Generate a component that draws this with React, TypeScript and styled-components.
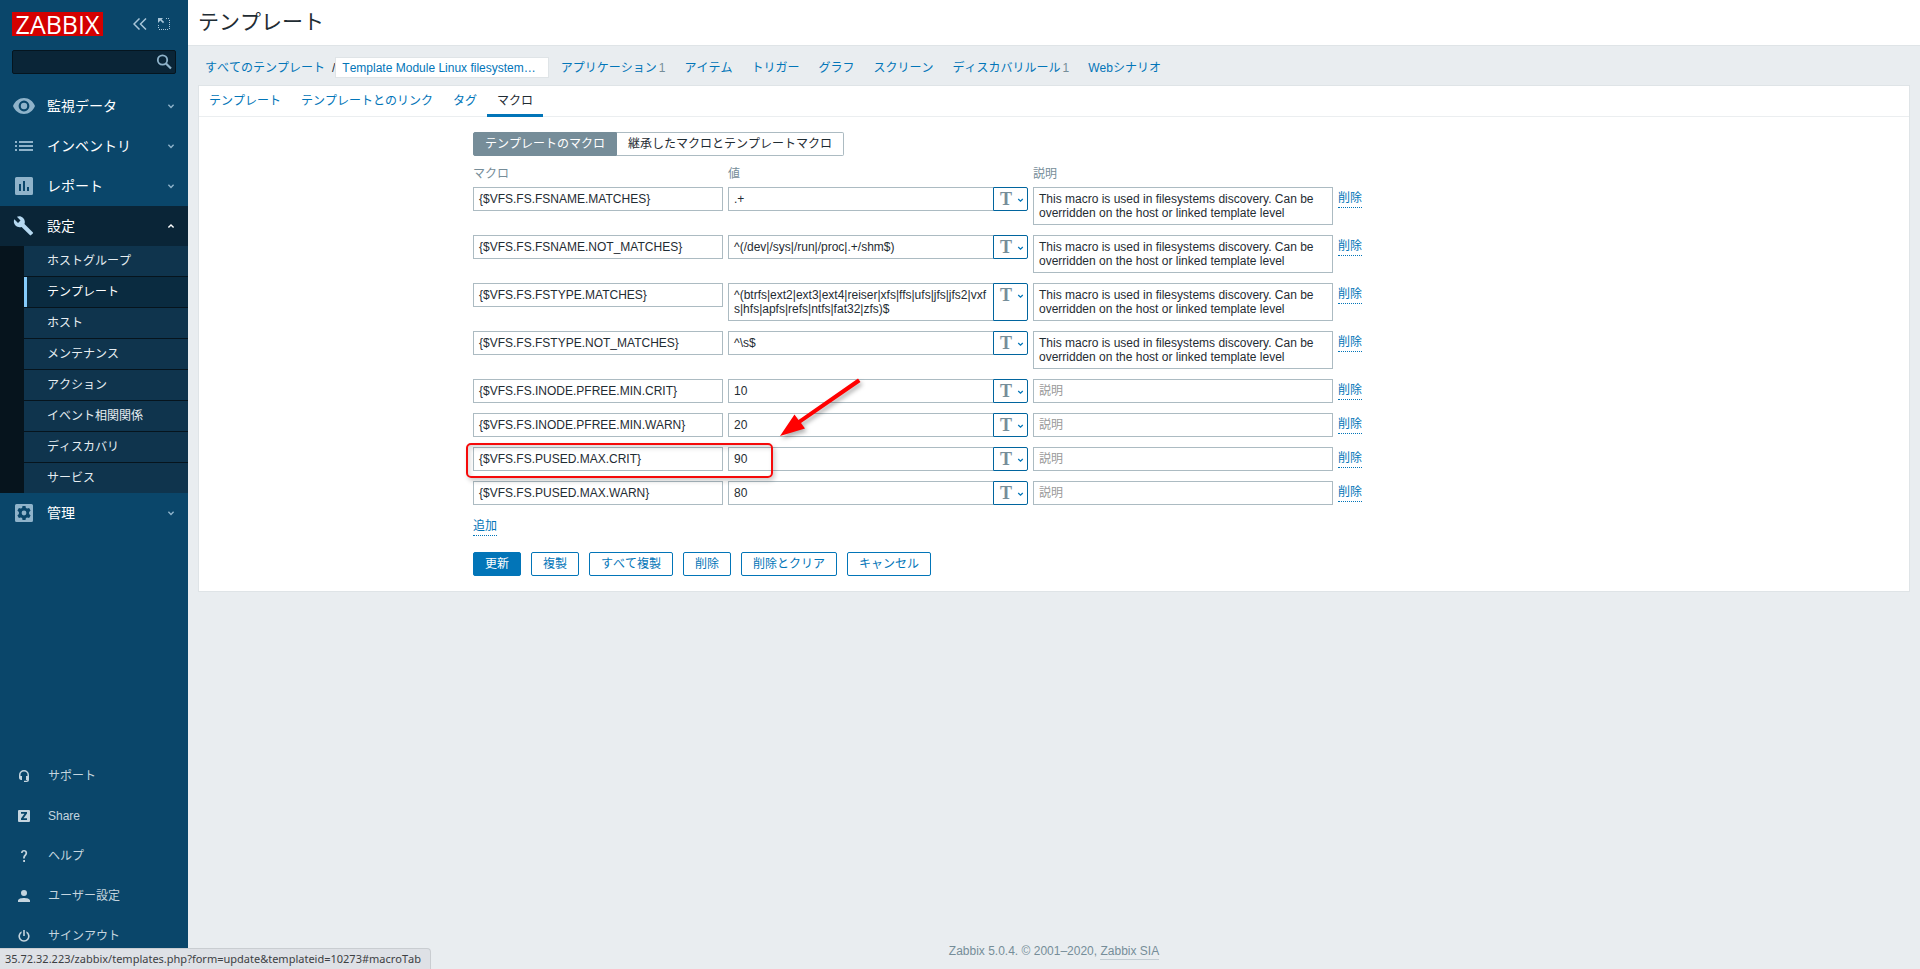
import React from "react";
import styled, { createGlobalStyle, css } from "styled-components";

const sans = `"Liberation Sans", "Noto Sans CJK JP", Arial, sans-serif`;

const GlobalStyle = createGlobalStyle`
  *, *::before, *::after { box-sizing: border-box; }
  body {
    margin: 0;
    background: #e9edf0;
    color: #1f2c33;
    font-family: ${sans};
    font-size: 12px;
    line-height: 14px;
    font-kerning: none;
  }
  button, input, textarea { font: inherit; color: inherit; }
  ul { list-style: none; margin: 0; padding: 0; }
`;

const Page = styled.div`
  display: flex;
  min-height: 100vh;
`;

/* ---------- sidebar ---------- */

const Sidebar = styled.aside`
  flex: 0 0 188px;
  height: 100vh;
  position: sticky;
  top: 0;
  display: flex;
  flex-direction: column;
  overflow: hidden;
  background: #0a466a;
  color: #ffffff;
`;

const SidebarHeader = styled.div`
  display: flex;
  align-items: center;
  padding: 12px 18px 0 12px;
`;

const Logo = styled.a`
  width: 91px;
  height: 24px;
  margin-right: auto;
  background: #d40000;
  color: #ffffff;
  font-family: "Open Sans", sans-serif;
  font-size: 25px;
  font-weight: 500;
  line-height: 24px;
  text-align: center;
  text-decoration: none;
`;

const HeaderButton = styled.button`
  display: flex;
  padding: 0;
  margin-left: 11px;
  border: 0;
  background: none;
  color: #a8c5d8;
  cursor: pointer;
`;

const Search = styled.form`
  display: flex;
  height: 24px;
  margin: 14px 12px 12px;
  border: 1px solid #05151f;
  border-radius: 2px;
  background: #0a2537;
`;

const SearchInput = styled.input`
  flex: 1;
  min-width: 0;
  padding: 0 5px;
  border: 0;
  outline: 0;
  background: transparent;
`;

const SearchButton = styled.button`
  display: flex;
  align-items: center;
  padding: 0 3px;
  border: 0;
  background: none;
  color: #8fb3ca;
`;

const MenuLink = styled.a<{ $open?: boolean }>`
  display: flex;
  align-items: center;
  height: 40px;
  padding: 0 13px 0 12px;
  color: #ffffff;
  font-size: 14px;
  text-decoration: none;
  background: ${(p) => (p.$open ? "#0a2537" : "transparent")};
  svg:first-child { color: ${(p) => (p.$open ? "#b5d8f0" : "#8fb3ca")}; }
  svg:last-child { color: ${(p) => (p.$open ? "#ffffff" : "#8fb3ca")}; }
`;

const MenuText = styled.span`
  flex: 1;
  margin-left: 11px;
`;

const SubMenu = styled.ul`
  border-left: 24px solid #06141d;
  background: #06141d;
  li + li { margin-top: 1px; }
`;

const SubLink = styled.a<{ $selected?: boolean }>`
  display: block;
  height: 30px;
  padding-left: 20px;
  border-left: 3px solid ${(p) => (p.$selected ? "#85cbfb" : "#0f344d")};
  background: ${(p) => (p.$selected ? "#0a2b40" : "#0f344d")};
  color: ${(p) => (p.$selected ? "#ffffff" : "#e6edf1")};
  line-height: 30px;
  text-decoration: none;
`;

const UserMenu = styled.ul`
  margin-top: auto;
  padding-bottom: 13px;
`;

const UserLink = styled.a`
  display: flex;
  align-items: center;
  gap: 18px;
  height: 40px;
  padding-left: 18px;
  color: #c5d5df;
  text-decoration: none;
`;

/* ---------- main column ---------- */

const Main = styled.main`
  flex: 1;
  min-width: 0;
  display: flex;
  flex-direction: column;
`;

const TitleBar = styled.header`
  height: 46px;
  padding: 0 10px;
  border-bottom: 1px solid #dfe4e7;
  background: #ffffff;
`;

const Title = styled.h1`
  margin: 0;
  font-size: 21px;
  font-weight: 400;
  line-height: 44px;
`;

const ObjectNav = styled.nav`
  display: flex;
  align-items: center;
  height: 39px;
  padding: 11px 17px 7px;
`;

const NavLink = styled.a`
  color: #0275b8;
  text-decoration: none;
  white-space: nowrap;
`;

const Slash = styled.span`
  margin-left: 7px;
`;

const CurrentObject = styled(NavLink)`
  height: 21px;
  margin-right: 12px;
  padding: 0 12px 0 6px;
  border: 1px solid #dfe4e7;
  background: #ffffff;
  line-height: 20px;
`;

const NavItems = styled.ul`
  display: flex;
  gap: 19px;
  white-space: nowrap;
`;

const Count = styled.sup`
  margin-left: 2px;
  color: #768d99;
  font-size: 12px;
  vertical-align: baseline;
`;

const Panel = styled.section`
  margin: 0 10px;
  border: 1px solid #dfe4e7;
  background: #ffffff;
`;

const Tabs = styled.ul`
  display: flex;
  height: 31px;
  border-bottom: 1px solid #ebeef0;
`;

const Tab = styled.a<{ $active?: boolean }>`
  display: block;
  height: 31px;
  padding: 0 10px;
  border-bottom: 3px solid ${(p) => (p.$active ? "#0275b8" : "transparent")};
  color: ${(p) => (p.$active ? "#1f2c33" : "#0275b8")};
  line-height: 30px;
  text-decoration: none;
`;

const FormBody = styled.form`
  padding: 15px 10px 15px 274px;
`;

const Segmented = styled.div`
  display: flex;
`;

const Segment = styled.label<{ $checked?: boolean }>`
  height: 24px;
  padding: 0 11px;
  border: 1px solid ${(p) => (p.$checked ? "#768d99" : "#acbbc2")};
  border-radius: ${(p) => (p.$checked ? "2px 0 0 2px" : "0 2px 2px 0")};
  background: ${(p) => (p.$checked ? "#768d99" : "#ffffff")};
  color: ${(p) => (p.$checked ? "#ffffff" : "#1f2c33")};
  line-height: 22px;
  & + & { border-left: 0; }
  input { position: absolute; opacity: 0; pointer-events: none; }
`;

const MacroArea = styled.div`
  position: relative;
`;

const MacroTable = styled.table`
  border-collapse: collapse;
  th {
    padding: 11px 0 6px;
    color: #768d99;
    font-weight: 400;
    line-height: 14px;
    text-align: left;
  }
  td {
    padding: 0 5px 10px 0;
    vertical-align: top;
  }
`;

const field = css`
  display: block;
  padding: 4px 5px;
  border: 1px solid #acbbc2;
  border-radius: 0;
  outline: 0;
  background: #ffffff;
  font-kerning: normal;
  line-height: 14px;
  resize: none;
  overflow: hidden;
  &::placeholder { color: #999999; opacity: 1; }
`;

const TextField = styled.textarea<{ $width: number; $lines?: number }>`
  ${field}
  width: ${(p) => p.$width}px;
  height: ${(p) => (p.$lines === 2 ? 38 : 24)}px;
`;

const ValueGroup = styled.div`
  display: flex;
  width: 300px;
`;

const ValueField = styled(TextField)`
  border-right: 0;
  word-break: break-all;
`;

const TypeButton = styled.button`
  display: flex;
  align-items: flex-start;
  gap: 5px;
  width: 35px;
  padding: 2px 0 0 6px;
  border: 1px solid #01659e;
  border-radius: 0 2px 2px 0;
  background: #ffffff;
  color: #768d99;
  font-family: "Liberation Serif", serif;
  font-size: 18px;
  font-weight: 700;
  line-height: 18px;
  svg { margin-top: 7px; color: #0275b8; }
`;

const DottedButton = styled.button`
  display: block;
  margin-top: 3px;
  padding: 0 0 1px;
  border: 0;
  border-bottom: 1px dotted #0275b8;
  background: none;
  color: #0275b8;
  line-height: 16px;
  cursor: pointer;
`;

const Highlight = styled.div`
  position: absolute;
  left: -7px;
  top: 287px;
  width: 307px;
  height: 35px;
  border: 2px solid #f50a0a;
  border-radius: 5px;
  box-shadow: 2px 3px 5px rgba(0, 0, 0, 0.2), inset 2px 3px 5px rgba(0, 0, 0, 0.15);
  pointer-events: none;
`;

const Arrow = styled.svg`
  position: absolute;
  left: 303px;
  top: 217px;
  pointer-events: none;
  filter: drop-shadow(2px 3px 2px rgba(0, 0, 0, 0.3));
`;

const Actions = styled.div`
  display: flex;
  gap: 10px;
  margin-top: 16px;
`;

const ActionButton = styled.button<{ $primary?: boolean }>`
  height: 24px;
  padding: 0 11px;
  border: 1px solid #0275b8;
  border-radius: 2px;
  background: ${(p) => (p.$primary ? "#0275b8" : "#ffffff")};
  color: ${(p) => (p.$primary ? "#ffffff" : "#0275b8")};
  line-height: 20px;
  white-space: nowrap;
`;

const Footer = styled.footer`
  margin-top: auto;
  padding: 10px 10px 9px;
  color: #768d99;
  text-align: center;
  line-height: 16px;
  a {
    display: inline-block;
    border-bottom: 1px solid #c3cdd3;
    color: inherit;
    text-decoration: none;
  }
`;

const StatusBar = styled.div`
  position: fixed;
  left: 0;
  bottom: 0;
  height: 21px;
  padding: 0 9px 0 5px;
  border-top: 1px solid #c9cdd1;
  border-right: 1px solid #c9cdd1;
  border-radius: 0 4px 0 0;
  background: #dee1e6;
  color: #3c4043;
  font-family: "Noto Sans", sans-serif;
  font-size: 11px;
  line-height: 19px;
`;

/* ---------- icons ---------- */

const Chevron = ({ up, size = 8 }: { up?: boolean; size?: number }) => (
  <svg width={size} height="6" viewBox="0 0 8 6" fill="none" stroke="currentColor" strokeWidth="1.4">
    <path d={up ? "M1.400 4.600 4 2l2.600 2.600" : "M1.400 1.800 4 4.400l2.600-2.600"} />
  </svg>
);

const MenuIcon = ({ children }: { children: React.ReactNode }) => (
  <svg width="24" height="24" viewBox="0 0 24 24" fill="currentColor">
    {children}
  </svg>
);

const icons = {
  eye: <path fillRule="evenodd" d="M12 4C7 4 3 7.200 1 12c2 4.800 6 8 11 8s9-3.200 11-8c-2-4.800-6-8-11-8Zm0 13.400a5.400 5.400 0 1 1 0-10.800 5.400 5.400 0 0 1 0 10.800Zm0-2.200a3.200 3.200 0 1 0 0-6.400 3.200 3.200 0 0 0 0 6.400Z" />,
  list: <path d="M3 7h2v2H3zM3 11h2v2H3zM3 15h2v2H3zM7 7h14v2H7zM7 11h14v2H7zM7 15h14v2H7z" />,
  chart: <path fillRule="evenodd" d="M4.500 3h15A1.500 1.500 0 0 1 21 4.500v15a1.500 1.500 0 0 1-1.500 1.500h-15A1.500 1.500 0 0 1 3 19.500v-15A1.500 1.500 0 0 1 4.500 3ZM7 10v7h2v-7Zm4-3v10h2V7Zm4 6v4h2v-4Z" />,
  wrench: <path d="m20.700 18.200-8.200-8.200c.8-2 .3-4.500-1.400-6.100C9.400 2.200 6.900 1.900 4.900 2.800l3.600 3.600-2.500 2.500-3.700-3.600c-.9 2-.5 4.500 1.200 6.200 1.700 1.700 4.100 2.100 6.100 1.400l8.200 8.200c.4.400.9.400 1.300 0l1.700-1.700c.4-.3.4-.9-.1-1.200Z" />,
  gear: <path fillRule="evenodd" d="M4.500 3h15A1.500 1.500 0 0 1 21 4.500v15a1.500 1.500 0 0 1-1.500 1.500h-15A1.500 1.500 0 0 1 3 19.500v-15A1.500 1.500 0 0 1 4.500 3Zm6 2-.4 1.900-1.300.7-1.900-.6-1.500 2.600L6.900 11v2l-1.500 1.400L6.900 17l1.900-.6 1.300.7.4 1.900h3l.4-1.900 1.300-.7 1.900.6 1.500-2.600-1.500-1.400v-2l1.500-1.400L17.100 7l-1.900.6-1.300-.7-.4-1.900ZM12 9.600a2.400 2.400 0 1 1 0 4.800 2.400 2.400 0 0 1 0-4.800Z" />,
};

const SmallIcon = ({ children }: { children: React.ReactNode }) => (
  <svg width="12" height="12" viewBox="0 0 12 12" fill="currentColor">
    {children}
  </svg>
);

const userIcons = {
  support: <path d="M6 0a5 5 0 0 0-5 5v2.500C1 8.900 1.900 10 3.200 10H4V6H2.500V5a3.500 3.500 0 0 1 7 0v1H8v4h1.400c0 .4-.4.700-.9.700H6V12h2.500A2.500 2.500 0 0 0 11 9.500V5a5 5 0 0 0-5-5Z" />,
  share: <path fillRule="evenodd" d="M1 0h10a1 1 0 0 1 1 1v10a1 1 0 0 1-1 1H1a1 1 0 0 1-1-1V1a1 1 0 0 1 1-1Zm2 2v1.800h3.500L3 8.500V10h6V8.200H5.500L9 3.500V2Z" />,
  help: <path d="M5.200 10h1.800v2H5.200zM6 0C4.300 0 3 1.200 3 3h1.600c0-.9.600-1.500 1.400-1.500S7.500 2.100 7.500 3c0 1.500-2.400 2-2.400 4.700v.8h1.700v-.6C6.800 6 9.200 5.500 9.200 3 9.200 1.200 7.800 0 6 0Z" />,
  user: <path d="M6 0a3 3 0 1 1 0 6 3 3 0 0 1 0-6ZM0 12v-1.500C0 8.800 3.500 8 6 8s6 .8 6 2.500V12Z" />,
  power: <path d="M5.200 0h1.600v6H5.200zM3.600 1.200v1.900a4 4 0 1 0 4.800 0V1.200a5.600 5.600 0 1 1-4.800 0Z" />,
};

/* ---------- data ---------- */

const menuTop = [
  { label: "監視データ", icon: icons.eye },
  { label: "インベントリ", icon: icons.list },
  { label: "レポート", icon: icons.chart },
];

const subItems = ["ホストグループ", "テンプレート", "ホスト", "メンテナンス", "アクション", "イベント相関関係", "ディスカバリ", "サービス"];

const userItems = [
  { label: "サポート", icon: userIcons.support },
  { label: "Share", icon: userIcons.share },
  { label: "ヘルプ", icon: userIcons.help },
  { label: "ユーザー設定", icon: userIcons.user },
  { label: "サインアウト", icon: userIcons.power },
];

const navItems: { label: string; count?: number }[] = [
  { label: "アプリケーション", count: 1 },
  { label: "アイテム" },
  { label: "トリガー" },
  { label: "グラフ" },
  { label: "スクリーン" },
  { label: "ディスカバリルール", count: 1 },
  { label: "Webシナリオ" },
];

const tabs = ["テンプレート", "テンプレートとのリンク", "タグ", "マクロ"];

const discovery = "This macro is used in filesystems discovery. Can be overridden on the host or linked template level";

const macros: { name: string; value: string; lines?: number; text?: string }[] = [
  { name: "{$VFS.FS.FSNAME.MATCHES}", value: ".+", text: discovery },
  { name: "{$VFS.FS.FSNAME.NOT_MATCHES}", value: "^(/dev|/sys|/run|/proc|.+/shm$)", text: discovery },
  { name: "{$VFS.FS.FSTYPE.MATCHES}", value: "^(btrfs|ext2|ext3|ext4|reiser|xfs|ffs|ufs|jfs|jfs2|vxfs|hfs|apfs|refs|ntfs|fat32|zfs)$", lines: 2, text: discovery },
  { name: "{$VFS.FS.FSTYPE.NOT_MATCHES}", value: "^\\s$", text: discovery },
  { name: "{$VFS.FS.INODE.PFREE.MIN.CRIT}", value: "10" },
  { name: "{$VFS.FS.INODE.PFREE.MIN.WARN}", value: "20" },
  { name: "{$VFS.FS.PUSED.MAX.CRIT}", value: "90" },
  { name: "{$VFS.FS.PUSED.MAX.WARN}", value: "80" },
];

const actions = ["更新", "複製", "すべて複製", "削除", "削除とクリア", "キャンセル"];

const MainMenuItem = ({ label, icon, open }: { label: string; icon: React.ReactNode; open?: boolean }) => (
  <MenuLink href="#" $open={open}>
    <MenuIcon>{icon}</MenuIcon>
    <MenuText>{label}</MenuText>
    <Chevron up={open} />
  </MenuLink>
);

export default function App() {
  return (
    <>
      <GlobalStyle />
      <Page>
        <Sidebar>
          <SidebarHeader>
            <Logo href="#">ZABBIX</Logo>
            <HeaderButton type="button" aria-label="サイドバーを折りたたむ">
              <svg width="14" height="12" viewBox="0 0 14 12" fill="none" stroke="currentColor" strokeWidth="1.500">
                <path d="M6.500.5 1 6l5.500 5.500M13 .5 7.500 6l5.500 5.500" />
              </svg>
            </HeaderButton>
            <HeaderButton type="button" aria-label="サイドバーを隠す">
              <svg width="12" height="12" viewBox="0 0 12 12" fill="none" stroke="currentColor">
                <path d="M8 .5h4M11.500 2v10M10 11.500H0M.5 10V6" strokeDasharray="1 1" />
                <path d="M0 0h5L3.600 1.400 6.200 4 5 5.200 2.400 2.600 0 5Z" fill="currentColor" stroke="none" />
              </svg>
            </HeaderButton>
          </SidebarHeader>
          <Search onSubmit={(e) => e.preventDefault()}>
            <SearchInput type="text" aria-label="検索" />
            <SearchButton type="submit" aria-label="検索する">
              <svg width="16" height="16" viewBox="0 0 16 16" fill="none" stroke="currentColor">
                <circle cx="6.500" cy="6" r="4.700" strokeWidth="1.800" />
                <path d="m10 9.500 5 5" strokeWidth="2.200" />
              </svg>
            </SearchButton>
          </Search>
          <nav>
            <ul>
              {menuTop.map((m) => (
                <li key={m.label}>
                  <MainMenuItem {...m} />
                </li>
              ))}
              <li>
                <MainMenuItem label="設定" icon={icons.wrench} open />
                <SubMenu>
                  {subItems.map((s) => (
                    <li key={s}>
                      <SubLink href="#" $selected={s === "テンプレート"}>{s}</SubLink>
                    </li>
                  ))}
                </SubMenu>
              </li>
              <li>
                <MainMenuItem label="管理" icon={icons.gear} />
              </li>
            </ul>
          </nav>
          <UserMenu>
            {userItems.map((u) => (
              <li key={u.label}>
                <UserLink href="#">
                  <SmallIcon>{u.icon}</SmallIcon>
                  {u.label}
                </UserLink>
              </li>
            ))}
          </UserMenu>
        </Sidebar>

        <Main>
          <TitleBar>
            <Title>テンプレート</Title>
          </TitleBar>
          <ObjectNav>
            <NavLink href="#">すべてのテンプレート</NavLink>
            <Slash>/</Slash>
            <CurrentObject href="#">Template Module Linux filesystem…</CurrentObject>
            <NavItems>
              {navItems.map((n) => (
                <li key={n.label}>
                  <NavLink href="#">{n.label}</NavLink>
                  {n.count && <Count>{n.count}</Count>}
                </li>
              ))}
            </NavItems>
          </ObjectNav>

          <Panel>
            <Tabs>
              {tabs.map((t) => (
                <li key={t}>
                  <Tab href="#" $active={t === "マクロ"}>{t}</Tab>
                </li>
              ))}
            </Tabs>
            <FormBody onSubmit={(e) => e.preventDefault()}>
              <Segmented>
                <Segment $checked>
                  <input type="radio" name="scope" defaultChecked />
                  テンプレートのマクロ
                </Segment>
                <Segment>
                  <input type="radio" name="scope" />
                  継承したマクロとテンプレートマクロ
                </Segment>
              </Segmented>
              <MacroArea>
                <MacroTable>
                  <thead>
                    <tr>
                      <th>マクロ</th>
                      <th>値</th>
                      <th>説明</th>
                      <th />
                    </tr>
                  </thead>
                  <tbody>
                    {macros.map((m) => (
                      <tr key={m.name}>
                        <td>
                          <TextField $width={250} aria-label="マクロ" spellCheck={false} defaultValue={m.name} />
                        </td>
                        <td>
                          <ValueGroup>
                            <ValueField $width={265} $lines={m.lines} aria-label="値" spellCheck={false} defaultValue={m.value} />
                            <TypeButton type="button" aria-label="値のタイプ">
                              T
                              <Chevron size={7} />
                            </TypeButton>
                          </ValueGroup>
                        </td>
                        <td>
                          <TextField $width={300} $lines={m.text ? 2 : 1} aria-label="説明" placeholder="説明" spellCheck={false} defaultValue={m.text} />
                        </td>
                        <td>
                          <DottedButton type="button">削除</DottedButton>
                        </td>
                      </tr>
                    ))}
                  </tbody>
                </MacroTable>
                <Highlight />
                <Arrow width="90" height="70" viewBox="0 0 90 70" fill="#ff0000">
                  <path d="M82 5.500 22.500 47l-4-5.500L4 63l25-7.500-4-5.500L84.500 9Z" />
                </Arrow>
              </MacroArea>
              <DottedButton type="button">追加</DottedButton>
              <Actions>
                {actions.map((a, i) => (
                  <ActionButton key={a} type="button" $primary={i === 0}>{a}</ActionButton>
                ))}
              </Actions>
            </FormBody>
          </Panel>

          <Footer>
            Zabbix 5.0.4. © 2001–2020, <a href="#">Zabbix SIA</a>
          </Footer>
        </Main>
      </Page>
      <StatusBar>35.72.32.223/zabbix/templates.php?form=update&amp;templateid=10273#macroTab</StatusBar>
    </>
  );
}
